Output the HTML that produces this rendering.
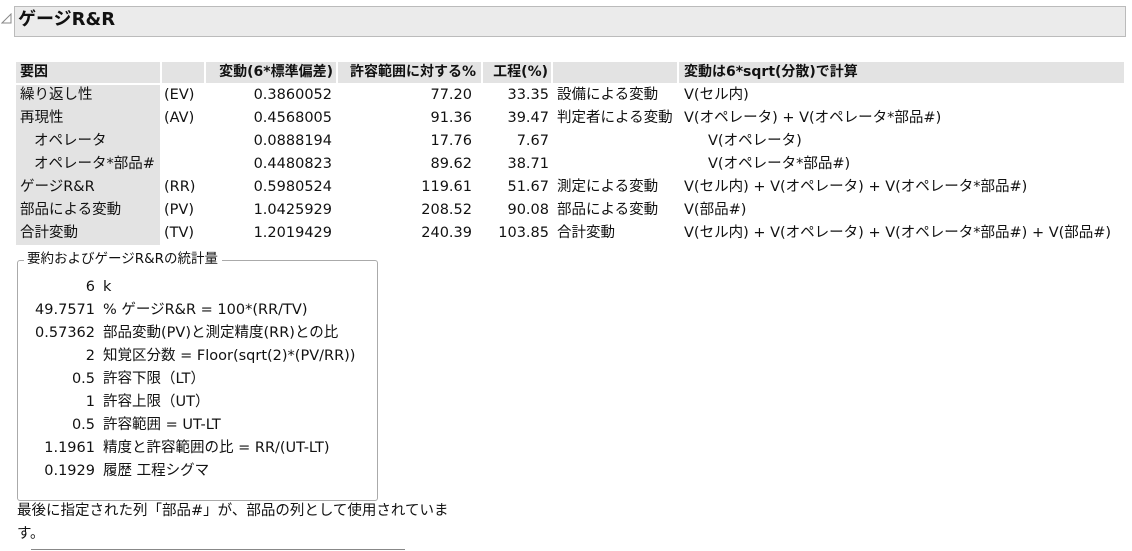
<!DOCTYPE html>
<html><head><meta charset="utf-8"><style>
body{margin:0;width:1132px;height:551px;background:#fff;font-family:"DejaVu Sans","Noto Sans CJK JP",sans-serif;font-size:14.5px;color:#111;position:relative;overflow:hidden}
.t{position:absolute;white-space:nowrap;line-height:19px}
.r{text-align:right}
.b{font-weight:bold}
.g{position:absolute;background:#e3e3e3}
</style></head><body>
<svg style="position:absolute;left:1px;top:13px" width="12" height="12"><path d="M10 1 L10 10 L1 10 Z" fill="none" stroke="#888" stroke-width="1"/></svg>
<div style="position:absolute;left:14px;top:6px;width:1110px;height:29px;background:#ebebeb;border:1px solid #bbb;"></div>
<div class="t b" style="left:18px;top:10px;font-size:18px;line-height:20px">ゲージR&amp;R</div>

<div class="g" style="left:16px;top:62px;width:1108px;height:21px"></div>
<div style="position:absolute;left:160px;top:62px;width:2px;height:21px;background:#fff"></div>
<div style="position:absolute;left:204px;top:62px;width:2px;height:21px;background:#fff"></div>
<div style="position:absolute;left:336px;top:62px;width:2px;height:21px;background:#fff"></div>
<div style="position:absolute;left:481px;top:62px;width:2px;height:21px;background:#fff"></div>
<div style="position:absolute;left:551px;top:62px;width:2px;height:21px;background:#fff"></div>
<div style="position:absolute;left:677px;top:62px;width:2px;height:21px;background:#fff"></div>
<div class="g" style="left:16px;top:85px;width:144px;height:160px"></div>

<div class="t b" style="left:20px;top:63px;font-size:14px">要因</div>
<div class="t b r" style="left:200px;width:133px;top:63px;font-size:14px">変動(6*標準偏差)</div>
<div class="t b r" style="left:330px;width:146px;top:63px;font-size:14px">許容範囲に対する%</div>
<div class="t b r" style="left:483px;width:65px;top:63px;font-size:14px">工程(%)</div>
<div class="t b" style="left:684px;top:63px;font-size:14px">変動は6*sqrt(分散)で計算</div>

<div class="t" style="left:20px;top:86px">繰り返し性</div>
<div class="t" style="left:20px;top:109px">再現性</div>
<div class="t" style="left:34px;top:132px">オペレータ</div>
<div class="t" style="left:34px;top:155px">オペレータ*部品#</div>
<div class="t" style="left:20px;top:178px">ゲージR&amp;R</div>
<div class="t" style="left:20px;top:201px">部品による変動</div>
<div class="t" style="left:20px;top:224px">合計変動</div>

<div class="t" style="left:164px;top:86px">(EV)</div>
<div class="t" style="left:164px;top:109px">(AV)</div>
<div class="t" style="left:164px;top:178px">(RR)</div>
<div class="t" style="left:164px;top:201px">(PV)</div>
<div class="t" style="left:164px;top:224px">(TV)</div>

<div class="t r" style="left:206px;width:126px;top:86px">0.3860052</div>
<div class="t r" style="left:206px;width:126px;top:109px">0.4568005</div>
<div class="t r" style="left:206px;width:126px;top:132px">0.0888194</div>
<div class="t r" style="left:206px;width:126px;top:155px">0.4480823</div>
<div class="t r" style="left:206px;width:126px;top:178px">0.5980524</div>
<div class="t r" style="left:206px;width:126px;top:201px">1.0425929</div>
<div class="t r" style="left:206px;width:126px;top:224px">1.2019429</div>

<div class="t r" style="left:338px;width:134px;top:86px">77.20</div>
<div class="t r" style="left:338px;width:134px;top:109px">91.36</div>
<div class="t r" style="left:338px;width:134px;top:132px">17.76</div>
<div class="t r" style="left:338px;width:134px;top:155px">89.62</div>
<div class="t r" style="left:338px;width:134px;top:178px">119.61</div>
<div class="t r" style="left:338px;width:134px;top:201px">208.52</div>
<div class="t r" style="left:338px;width:134px;top:224px">240.39</div>

<div class="t r" style="left:483px;width:66px;top:86px">33.35</div>
<div class="t r" style="left:483px;width:66px;top:109px">39.47</div>
<div class="t r" style="left:483px;width:66px;top:132px">7.67</div>
<div class="t r" style="left:483px;width:66px;top:155px">38.71</div>
<div class="t r" style="left:483px;width:66px;top:178px">51.67</div>
<div class="t r" style="left:483px;width:66px;top:201px">90.08</div>
<div class="t r" style="left:483px;width:66px;top:224px">103.85</div>

<div class="t" style="left:557px;top:86px">設備による変動</div>
<div class="t" style="left:557px;top:109px">判定者による変動</div>
<div class="t" style="left:557px;top:178px">測定による変動</div>
<div class="t" style="left:557px;top:201px">部品による変動</div>
<div class="t" style="left:557px;top:224px">合計変動</div>

<div class="t" style="left:684px;top:86px">V(セル内)</div>
<div class="t" style="left:684px;top:109px">V(オペレータ) + V(オペレータ*部品#)</div>
<div class="t" style="left:708px;top:132px">V(オペレータ)</div>
<div class="t" style="left:708px;top:155px">V(オペレータ*部品#)</div>
<div class="t" style="left:684px;top:178px">V(セル内) + V(オペレータ) + V(オペレータ*部品#)</div>
<div class="t" style="left:684px;top:201px">V(部品#)</div>
<div class="t" style="left:684px;top:224px">V(セル内) + V(オペレータ) + V(オペレータ*部品#) + V(部品#)</div>

<div style="position:absolute;left:17px;top:260px;width:359px;height:239px;border:1px solid #aaa;border-radius:3px"></div>
<div class="t" style="left:24px;top:250px;background:#fff;padding:0 4px 0 3px;font-size:13.5px">要約およびゲージR&amp;Rの統計量</div>

<div class="t r" style="left:20px;width:75px;top:278px">6</div>
<div class="t r" style="left:20px;width:75px;top:301px">49.7571</div>
<div class="t r" style="left:20px;width:75px;top:324px">0.57362</div>
<div class="t r" style="left:20px;width:75px;top:347px">2</div>
<div class="t r" style="left:20px;width:75px;top:370px">0.5</div>
<div class="t r" style="left:20px;width:75px;top:393px">1</div>
<div class="t r" style="left:20px;width:75px;top:416px">0.5</div>
<div class="t r" style="left:20px;width:75px;top:439px">1.1961</div>
<div class="t r" style="left:20px;width:75px;top:462px">0.1929</div>

<div class="t" style="left:103px;top:278px">k</div>
<div class="t" style="left:103px;top:301px">% ゲージR&amp;R = 100*(RR/TV)</div>
<div class="t" style="left:103px;top:324px">部品変動(PV)と測定精度(RR)との比</div>
<div class="t" style="left:103px;top:347px">知覚区分数 = Floor(sqrt(2)*(PV/RR))</div>
<div class="t" style="left:103px;top:370px">許容下限（LT）</div>
<div class="t" style="left:103px;top:393px">許容上限（UT）</div>
<div class="t" style="left:103px;top:416px">許容範囲 = UT-LT</div>
<div class="t" style="left:103px;top:439px">精度と許容範囲の比 = RR/(UT-LT)</div>
<div class="t" style="left:103px;top:462px">履歴 工程シグマ</div>

<div class="t" style="left:17px;top:502px">最後に指定された列「部品#」が、部品の列として使用されていま</div>
<div class="t" style="left:17px;top:525px">す。</div>
<div style="position:absolute;left:31px;top:549px;width:374px;height:1px;background:#888"></div>
</body></html>
